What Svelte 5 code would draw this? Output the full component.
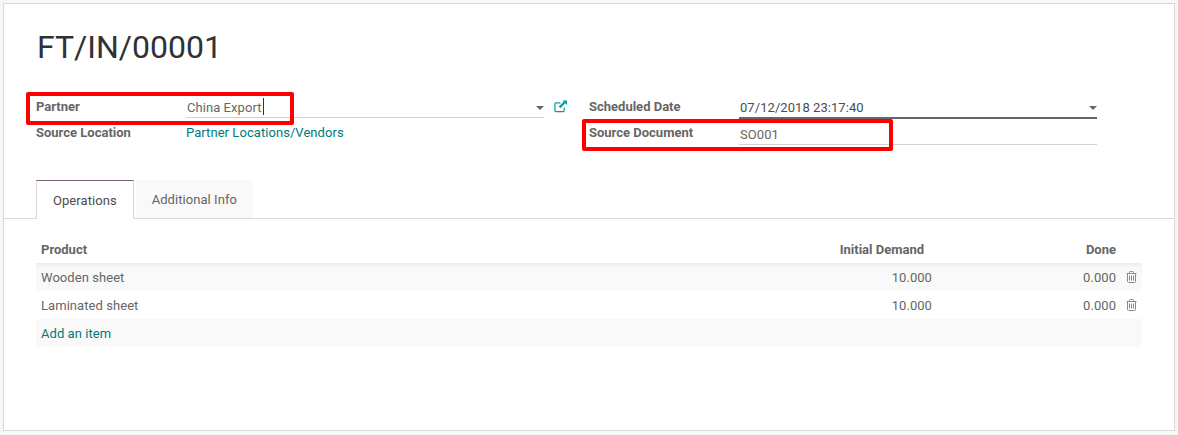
<script>
  const lines = [
    { name: "Wooden sheet", demand: "10.000", done: "0.000" },
    { name: "Laminated sheet", demand: "10.000", done: "0.000" },
  ];
</script>

<div class="page">
  <div class="sheet">
    <h1>FT/IN/00001</h1>

    <div class="groups">
      <div class="group left">
        <div class="row">
          <div class="label">Partner</div>
          <div class="field underline">
            <span class="value">China Export<i class="caret"></i></span>
            <span class="arrow"></span>
          </div>
          <svg class="external" viewBox="0 0 14 14" width="13" height="13" aria-hidden="true">
            <path d="M11 8v3.100a1.400 1.400 0 0 1-1.400 1.400H2.400A1.400 1.400 0 0 1 1 11.100V4.400A1.400 1.400 0 0 1 2.400 3H7" fill="none" stroke="#00a09d" stroke-width="1.300" />
            <path d="M9 0.500H14V5.500l-1.900-1.900-5.200 5.200-1.700-1.700 5.200-5.200z" fill="#00a09d" />
          </svg>
          <div class="mark mark-partner"></div>
        </div>
        <div class="row second">
          <div class="label">Source Location</div>
          <div class="link">Partner Locations/Vendors</div>
        </div>
      </div>

      <div class="group right">
        <div class="row">
          <div class="label">Scheduled Date</div>
          <div class="field strong">
            <span class="value">07/12/2018 23:17:40</span>
            <span class="arrow"></span>
          </div>
        </div>
        <div class="row second">
          <div class="label">Source Document</div>
          <div class="field underline">
            <span class="value low">SO001</span>
          </div>
          <div class="mark mark-source"></div>
        </div>
      </div>
    </div>

    <div class="tabs">
      <div class="tab active">Operations</div>
      <div class="tab">Additional Info</div>
    </div>

    <div class="lines">
      <div class="line head">
        <div class="product">Product</div>
        <div class="demand">Initial Demand</div>
        <div class="done">Done</div>
        <div class="trash"></div>
      </div>
      {#each lines as line, i}
        <div class="line" class:odd={i % 2 === 0} class:first={i === 0}>
          <div class="product">{line.name}</div>
          <div class="demand num">{line.demand}</div>
          <div class="done">{line.done}</div>
          <div class="trash">
            <svg viewBox="0 0 11 12" width="11" height="12" aria-hidden="true">
              <path d="M0.500 2.500h10M3.500 2.500V1.300q0-.8.8-.8h2.400q.8 0 .8.8v1.200M1.500 2.500v8q0 1 1 1h6q1 0 1-1v-8M3.500 4.500v5M5.500 4.500v5M7.500 4.500v5" fill="none" stroke="#8a8a8a" stroke-width="1" />
            </svg>
          </div>
        </div>
      {/each}
      <div class="line odd">
        <div class="product link">Add an item</div>
      </div>
    </div>
  </div>
</div>

<style>
  :global(body) {
    margin: 0;
    background: #f7f7f7;
  }

  .page {
    width: 1178px;
    height: 435px;
    padding: 3px;
    box-sizing: border-box;
    font-family: Roboto, "Open Sans", sans-serif;
    font-size: 13px;
    letter-spacing: 0.06px;
    color: #666666;
    overflow: hidden;
  }

  .sheet {
    height: 428px;
    box-sizing: border-box;
    background: #fff;
    border: 1px solid #d9d7d7;
    padding-top: 23px;
  }

  h1 {
    margin: 0 0 0 33px;
    font-size: 32px;
    line-height: 40px;
    font-weight: 400;
    letter-spacing: 0;
    color: #2f3136;
  }

  .groups {
    display: flex;
    margin-top: 30px;
    padding-left: 32px;
  }

  .group {
    display: flex;
    flex-direction: column;
  }

  .left {
    width: 531px;
    margin-right: 22px;
  }

  .right {
    width: 508px;
  }

  .row {
    position: relative;
    display: flex;
    align-items: flex-start;
    height: 25px;
    line-height: 20px;
  }

  .second {
    box-sizing: border-box;
    height: 26px;
    padding-top: 1px;
  }

  .label {
    width: 150px;
    flex: none;
    font-weight: 700;
    letter-spacing: 0;
    color: #666666;
  }

  .field {
    position: relative;
    flex: 1;
    height: 21px;
    box-sizing: border-box;
    padding-left: 1px;
    display: flex;
    justify-content: space-between;
  }

  .second .field {
    height: 22px;
  }

  .underline {
    border-bottom: 1px solid #d4d4d4;
  }

  .strong {
    border-bottom: 2px solid #666666;
    height: 22px;
    color: #4c4c4c;
  }

  .value {
    position: relative;
    top: 1px;
  }

  .low {
    top: 2px;
  }

  .caret {
    display: inline-block;
    width: 1px;
    height: 17px;
    background: #333;
    vertical-align: -3px;
    margin-left: 1px;
  }

  .arrow {
    width: 0;
    height: 0;
    margin-top: 9px;
    border-left: 4px solid transparent;
    border-right: 4px solid transparent;
    border-top: 4px solid #666666;
  }

  .external {
    margin: 3px 0 0 10px;
    flex: none;
  }

  .link {
    color: #00797a;
  }

  .mark {
    position: absolute;
    box-sizing: border-box;
    border: 4px solid #ff0000;
    border-radius: 2px;
  }

  .mark-partner {
    left: -10px;
    top: -5px;
    width: 268px;
    height: 33px;
  }

  .mark-source {
    left: -7px;
    top: -3px;
    width: 311px;
    height: 32px;
  }

  .tabs {
    display: flex;
    gap: 2px;
    margin-top: 32px;
    padding-left: 32px;
    border-bottom: 1px solid #d9d7d7;
    height: 38px;
  }

  .tab {
    box-sizing: border-box;
    height: 38px;
    padding: 0 16px;
    line-height: 39px;
    background: #f9f9f9;
    color: #666666;
  }

  .tab.active {
    height: 39px;
    background: #fff;
    color: #4c4c4c;
    border: 1px solid #d9d7d7;
    border-top: 1px solid #7c5a78;
    border-bottom: none;
    line-height: 40px;
  }

  .lines {
    margin: 16px 32px 0 32px;
  }

  .line {
    display: flex;
    align-items: center;
    height: 28px;
    padding-left: 5px;
  }

  .head {
    font-weight: 700;
    letter-spacing: 0;
  }

  .odd {
    background: #f9f9f9;
  }

  .first {
    box-shadow: inset 0 5px 5px -4px #e6e6e6;
  }

  .product {
    flex: 1;
  }

  .demand {
    width: 120px;
    text-align: right;
  }

  .demand.num {
    width: 128px;
  }

  .head .demand {
    margin-right: 8px;
  }

  .done {
    width: 184px;
    text-align: right;
  }

  .trash {
    width: 26px;
    flex: none;
    display: flex;
    justify-content: center;
    padding-left: 4px;
    box-sizing: border-box;
  }
</style>
